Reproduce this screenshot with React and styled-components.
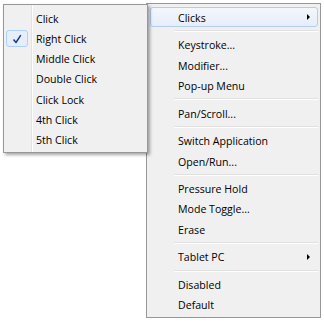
import React from "react";
import styled, { createGlobalStyle } from "styled-components";

const GlobalStyle = createGlobalStyle`
  html, body {
    margin: 0;
    background: #ffffff;
  }
  body {
    font-family: "Open Sans", "Noto Sans", sans-serif;
    font-size: 10.6px;
    color: #000;
  }
`;

const Screen = styled.div`
  position: relative;
  width: 324px;
  height: 323px;
  overflow: hidden;
  box-sizing: border-box;
  padding: 3px 0 0 146px;
`;

const MenuBox = styled.div`
  box-sizing: border-box;
  width: ${(p) => p.$width}px;
  border: 1px solid #979797;
  background: #f0f0f0;
  padding: 3px 2px 2px 3px;
  display: flex;
  flex-direction: column;
`;

const MainMenu = styled(MenuBox)`
  height: 315px;
`;

const SubMenu = styled(MenuBox)`
  position: absolute;
  left: 3px;
  top: 4px;
  height: 149px;
  padding-left: 2px;
  box-shadow: 2px 2px 3px rgba(0, 0, 0, 0.35);
  z-index: 2;

  &::before {
    content: "";
    position: absolute;
    left: 27px;
    top: 0;
    bottom: 0;
    width: 1px;
    background: #e2e3e3;
    border-right: 1px solid #ffffff;
  }
`;

const Item = styled.div`
  position: relative;
  box-sizing: border-box;
  height: 20.33px;
  display: flex;
  align-items: center;
  padding-left: ${(p) => p.$indent}px;
  padding-right: 7px;
  border: 1px solid ${(p) => (p.$hot ? "#b3cdf0" : "transparent")};
  border-radius: 3px;
  background: ${(p) =>
    p.$hot ? "linear-gradient(#f3f7fd, #e6eefa)" : "transparent"};
  white-space: nowrap;
`;

const Label = styled.span`
  flex: 1;
  padding-top: 1px;
`;

const CheckCell = styled.span`
  position: absolute;
  left: -1px;
  top: 1px;
  width: 22px;
  height: 17px;
  box-sizing: border-box;
  border: 1px solid #aecff7;
  border-radius: 3px;
  background: #e6eefa;
  display: flex;
  align-items: center;
  justify-content: center;
`;

const Arrow = styled.span`
  width: 0;
  height: 0;
  border-left: 3.5px solid #000;
  border-top: 3.5px solid transparent;
  border-bottom: 3.5px solid transparent;
`;

const Separator = styled.div`
  height: 7.67px;
  display: flex;
  align-items: center;
  padding-left: 24px;

  &::after {
    content: "";
    flex: 1;
    height: 1px;
    background: #e0e0e0;
    border-bottom: 1px solid #ffffff;
  }
`;

const mainItems = [
  { label: "Clicks", sub: true, hot: true },
  "-",
  { label: "Keystroke..." },
  { label: "Modifier..." },
  { label: "Pop-up Menu" },
  "-",
  { label: "Pan/Scroll..." },
  "-",
  { label: "Switch Application" },
  { label: "Open/Run..." },
  "-",
  { label: "Pressure Hold" },
  { label: "Mode Toggle..." },
  { label: "Erase" },
  "-",
  { label: "Tablet PC", sub: true },
  "-",
  { label: "Disabled" },
  { label: "Default" },
];

const clickItems = [
  "Click",
  "Right Click",
  "Middle Click",
  "Double Click",
  "Click Lock",
  "4th Click",
  "5th Click",
];

const CheckMark = () => (
  <svg width="10" height="10" viewBox="0 0 10 10">
    <path
      d="M1.5 5.5 L4 8.5 L8.8 1.2"
      fill="none"
      stroke="#1b3b8f"
      strokeWidth="1.5"
      strokeLinejoin="round"
    />
  </svg>
);

const App = () => {
  return (
    <>
      <GlobalStyle />
      <Screen>
        <MainMenu $width={175}>
          {mainItems.map((item, i) =>
            item === "-" ? (
              <Separator key={i} />
            ) : (
              <Item key={i} $indent={27} $hot={item.hot}>
                <Label>{item.label}</Label>
                {item.sub && <Arrow />}
              </Item>
            )
          )}
        </MainMenu>
        <SubMenu $width={145}>
          {clickItems.map((label) => (
            <Item key={label} $indent={29}>
              {label === "Right Click" && (
                <CheckCell>
                  <CheckMark />
                </CheckCell>
              )}
              <Label>{label}</Label>
            </Item>
          ))}
        </SubMenu>
      </Screen>
    </>
  );
};

export default App;
